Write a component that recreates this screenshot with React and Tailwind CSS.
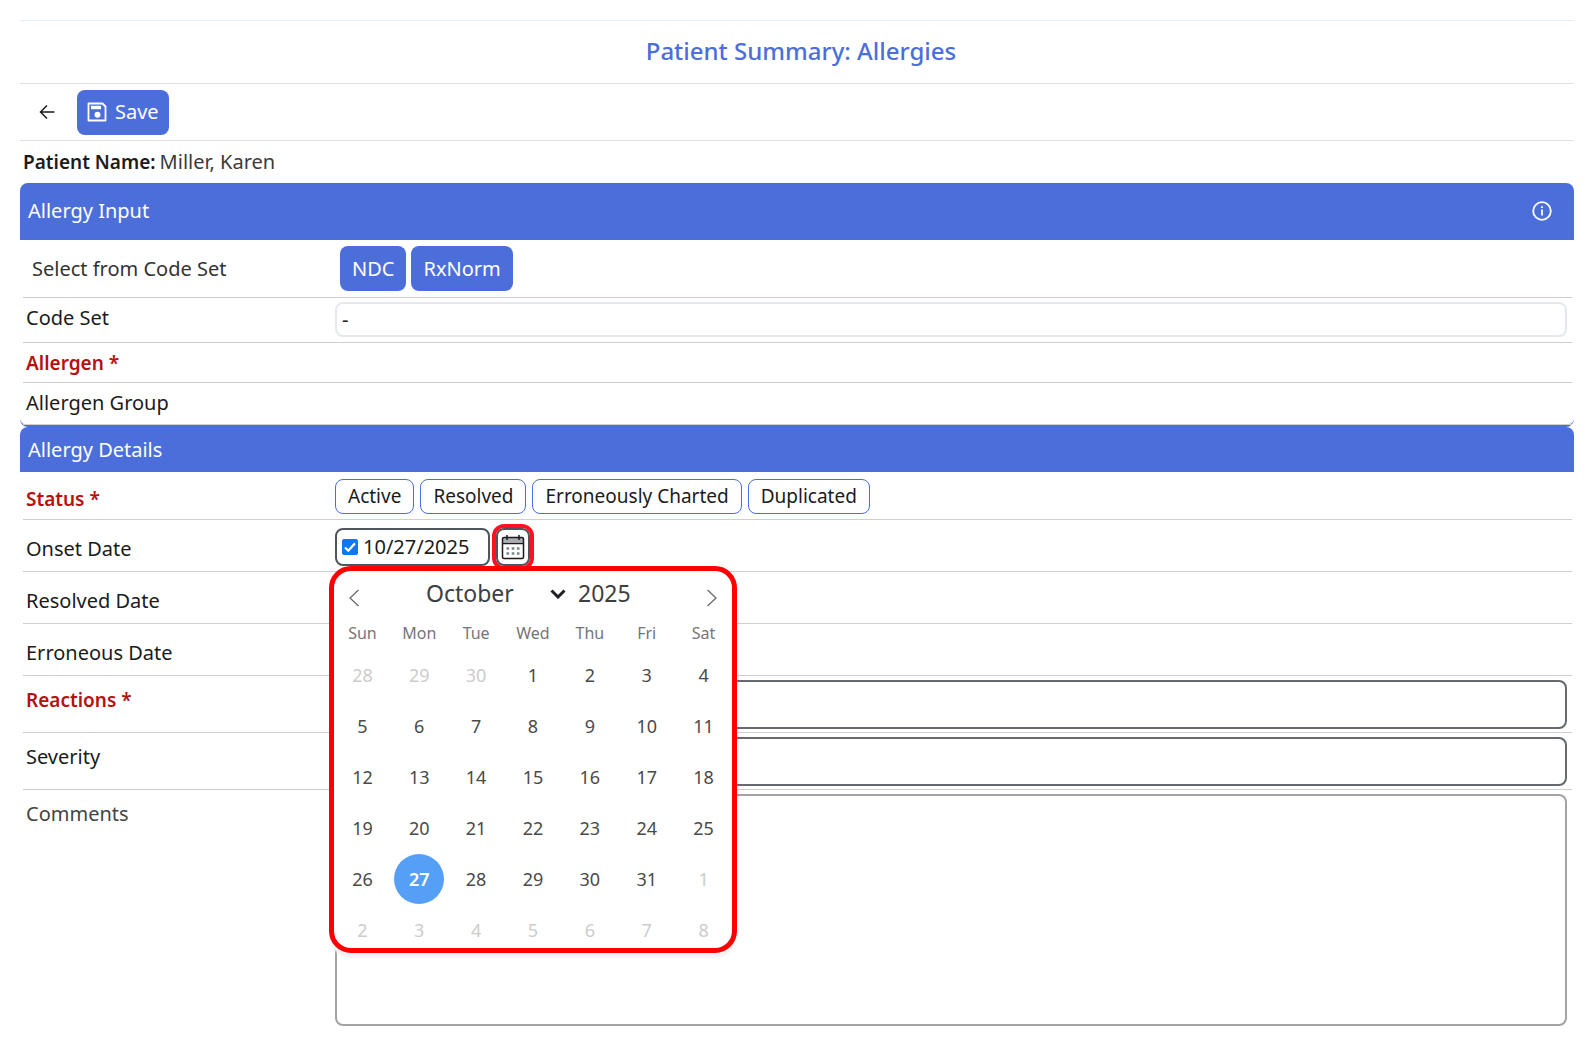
import React, { useState } from 'react';

const WEEKDAYS = ['Sun', 'Mon', 'Tue', 'Wed', 'Thu', 'Fri', 'Sat'];
const MONTHS = [
  'January', 'February', 'March', 'April', 'May', 'June',
  'July', 'August', 'September', 'October', 'November', 'December',
];
const STATUSES = ['Active', 'Resolved', 'Erroneously Charted', 'Duplicated'];

const getDays = (year, month) => {
  const offset = new Date(year, month, 1).getDay();
  return Array.from({ length: 42 }, (_, i) => {
    const date = new Date(year, month, i - offset + 1);
    return { day: date.getDate(), inMonth: date.getMonth() === month, key: i };
  });
};

const SaveIcon = () => (
  <svg viewBox="0 0 20 20" className="h-5 w-5" fill="none" stroke="currentColor" strokeWidth="1.8" aria-hidden="true">
    <path d="M1.5 1.5H15.5L18.5 4.5V18.5H1.5Z" strokeLinejoin="round" />
    <path d="M4 5.5H14" strokeWidth="3.4" />
    <circle cx="10.5" cy="12.8" r="3" fill="currentColor" stroke="none" />
  </svg>
);

const BackIcon = () => (
  <svg viewBox="0 0 16 16" className="h-4 w-4" fill="none" stroke="currentColor" strokeWidth="1.5" aria-hidden="true">
    <path d="M15.5 8H1.5M8 1.5L1.5 8L8 14.5" />
  </svg>
);

const InfoIcon = () => (
  <svg viewBox="0 0 20 20" className="h-5 w-5" fill="none" stroke="currentColor" strokeWidth="1.8" aria-hidden="true">
    <circle cx="10" cy="10" r="8.8" />
    <path d="M10 8.5V14.5M10 5.3V7" />
  </svg>
);

const CalendarIcon = () => (
  <svg viewBox="0 0 24 26" className="h-[26px] w-6 shrink-0" fill="none" stroke="currentColor" strokeWidth="1.5" aria-hidden="true">
    <path d="M2 4H22V8.5H2Z" fill="#a9adb3" stroke="none" />
    <rect x="1.5" y="3.5" width="21" height="21" rx="1.5" />
    <path d="M1.5 9.5H22.5M6 1V6M18 1V6" />
    <path d="M5.5 14.5H18.5M5.5 19.5H18.5" stroke="#7b8390" strokeWidth="2.6" strokeDasharray="2.6 2.6" />
  </svg>
);

const CheckIcon = () => (
  <svg viewBox="0 0 16 16" className="pointer-events-none absolute inset-0 h-4 w-4" fill="none" stroke="white" strokeWidth="2.2" aria-hidden="true">
    <path d="M3 8.5L6.3 11.7L13 4.3" />
  </svg>
);

const Row = ({ label, htmlFor, required, className = '', labelClass = '', children }) => (
  <div className={`ml-[3px] mr-0.5 flex border-b border-[#cfcfcf] ${className}`}>
    <div className={`w-[312px] shrink-0 pl-[3px] ${labelClass}`}>
      <label htmlFor={htmlFor} className={required ? 'text-[19px] font-semibold text-[#b80f0f]' : ''}>
        {label}{required && ' *'}
      </label>
    </div>
    <div className="flex grow pr-[5px]">{children}</div>
  </div>
);

const DatePicker = () => {
  const [month, setMonth] = useState(9);
  const [year, setYear] = useState(2025);
  const [selected, setSelected] = useState(27);

  return (
    <div className="absolute top-[38px] -left-1.5 z-10 w-[408px] rounded-[22px] border-5 border-[#ff0000] bg-white shadow-[0_6px_2px_-1px_#f1f2f3]">
      <div className="flex h-[46px] items-center justify-between px-3.5 text-[#3c4043]">
        <button type="button" aria-label="Previous month" className="pt-2" onClick={() => setMonth((month + 11) % 12)}>
          <svg viewBox="0 0 12 18" className="h-[18px] w-3" fill="none" stroke="#6b6b6b" strokeWidth="1.3">
            <path d="M10.5 1L2 9L10.5 17" />
          </svg>
        </button>
        <div className="flex items-center text-[23px]">
          <select
            aria-label="Month"
            value={month}
            onChange={(e) => setMonth(Number(e.target.value))}
            className="w-[124px] appearance-none bg-transparent"
          >
            {MONTHS.map((name, i) => (
              <option key={name} value={i}>{name}</option>
            ))}
          </select>
          <svg viewBox="0 0 16 10" className="h-2.5 w-4" fill="none" stroke="#202124" strokeWidth="3">
            <path d="M1.5 1.5L8 8L14.5 1.5" />
          </svg>
          <input
            type="text"
            aria-label="Year"
            value={year}
            onChange={(e) => setYear(Number(e.target.value) || 0)}
            className="ml-3 w-[62px]"
          />
        </div>
        <button type="button" aria-label="Next month" className="pt-2" onClick={() => setMonth((month + 1) % 12)}>
          <svg viewBox="0 0 12 18" className="h-[18px] w-3" fill="none" stroke="#6b6b6b" strokeWidth="1.3">
            <path d="M1.5 1L10 9L1.5 17" />
          </svg>
        </button>
      </div>
      <div className="grid h-[33px] grid-cols-7 items-center text-center text-base text-[#757575]">
        {WEEKDAYS.map((day) => (
          <span key={day}>{day}</span>
        ))}
      </div>
      <div className="-mb-[7px] grid grid-cols-7 gap-y-px text-lg">
        {getDays(year, month).map(({ day, inMonth, key }) => {
          const active = inMonth && day === selected;
          return (
            <button
              key={key}
              type="button"
              onClick={() => inMonth && setSelected(day)}
              className={`mx-auto h-[50px] w-[50px] rounded-full ${
                active ? 'bg-[#569ff7] font-semibold text-white' : inMonth ? 'text-[#4a4a4a]' : 'text-[#cccccc]'
              }`}
            >
              {day}
            </button>
          );
        })}
      </div>
    </div>
  );
};

const App = () => {
  const [status, setStatus] = useState('');
  const [onsetDate, setOnsetDate] = useState('10/27/2025');
  const [hasOnset, setHasOnset] = useState(true);

  return (
    <main className="min-h-screen bg-white pt-5 pr-[19px] pl-5 font-['Noto_Sans','Open_Sans',sans-serif] text-xl text-[#1b1b1b]">
      <h1 className="flex h-16 items-center justify-center border-y border-t-[#e6edfb] border-b-[#dee2e6] pb-0.5 pl-2 text-2xl font-medium text-[#4c6edb]">
        Patient Summary: Allergies
      </h1>

      <div className="flex h-[57px] items-center border-b border-[#dee2e6] pl-[19px]">
        <button type="button" aria-label="Back" className="mr-[22px]">
          <BackIcon />
        </button>
        <button type="button" className="flex h-[45px] items-center gap-2 rounded-lg bg-[#4c6edb] px-2.5 text-white">
          <SaveIcon />
          Save
        </button>
      </div>

      <p className="flex h-[42px] items-center pl-[3px]">
        <span className="mr-1 text-[19px] font-semibold">Patient Name:</span>
        <span className="text-[#3a3a3a]">Miller, Karen</span>
      </p>

      <form onSubmit={(e) => e.preventDefault()}>
        <section className="rounded-b-lg border-b-2 border-[#4c6edb]">
          <header className="flex h-[57px] items-center justify-between rounded-t-lg bg-[#4c6edb] pr-[22px] pb-0.5 pl-2 text-white">
            <h2>Allergy Input</h2>
            <button type="button" aria-label="About allergy input">
              <InfoIcon />
            </button>
          </header>

          <Row label="Select from Code Set" className="h-[58px] items-center" labelClass="pl-[9px] text-[#333]">
            <div className="flex gap-[5px] pl-[5px]">
              <button type="button" className="h-[45px] rounded-lg bg-[#4c6edb] px-3 text-white">NDC</button>
              <button type="button" className="h-[45px] rounded-lg bg-[#4c6edb] px-3 text-white">RxNorm</button>
            </div>
          </Row>
          <Row label="Code Set" htmlFor="codeSet" className="h-[45px] items-center pb-0.5" labelClass="pb-0.5">
            <input
              id="codeSet"
              type="text"
              defaultValue="-"
              className="h-[35px] w-full rounded-lg border-2 border-[#e5e8ec] px-[5px]"
            />
          </Row>
          <Row label="Allergen" required className="h-10 items-center" />
          <Row label="Allergen Group" className="h-[42px] items-center" labelClass="pb-0.5" />
        </section>

        <section>
          <header className="flex h-[45px] items-center rounded-t-lg bg-[#4c6edb] pl-2 text-white">
            <h2>Allergy Details</h2>
          </header>

          <Row label="Status" required className="h-12 items-center pt-0.5" labelClass="pt-1">
            <div className="flex gap-1.5">
              {STATUSES.map((name) => (
                <button
                  key={name}
                  type="button"
                  onClick={() => setStatus(name)}
                  className={`h-[35px] rounded-lg border border-[#4c6edb] px-3 text-[19px] leading-none ${status === name ? 'bg-[#e6edfb]' : ''}`}
                >
                  {name}
                </button>
              ))}
            </div>
          </Row>
          <Row label="Onset Date" htmlFor="onsetDate" className="h-[52px] items-center pt-0.5" labelClass="pt-1">
            <div className="relative flex">
              <div className="flex h-[38px] w-[155px] items-center rounded-lg border-2 border-[#50555c] pl-[5px]">
                <span className="relative h-4 w-4">
                  <input
                    type="checkbox"
                    aria-label="Use onset date"
                    checked={hasOnset}
                    onChange={(e) => setHasOnset(e.target.checked)}
                    className="block h-4 w-4 appearance-none rounded-xs border border-[#767676] checked:border-[#0d78f2] checked:bg-[#0d78f2]"
                  />
                  {hasOnset && <CheckIcon />}
                </span>
                <input
                  id="onsetDate"
                  type="text"
                  value={onsetDate}
                  onChange={(e) => setOnsetDate(e.target.value)}
                  className="ml-[5px] w-[120px]"
                />
              </div>
              <button
                type="button"
                aria-label="Open calendar"
                className="ml-1.5 flex h-[38px] w-[34px] items-center justify-center rounded-lg border-2 border-[#50555c] outline-4 outline-[#fb1420]"
              >
                <CalendarIcon />
              </button>
              <DatePicker />
            </div>
          </Row>
          <Row label="Resolved Date" className="h-[52px] items-center" labelClass="pt-1.5" />
          <Row label="Erroneous Date" className="h-[52px] items-center" labelClass="pt-1.5" />
          <Row label="Reactions" htmlFor="reactions" required className="h-[57px] items-center" labelClass="pb-2">
            <input id="reactions" type="text" className="h-[49px] w-full rounded-lg border-2 border-[#666a70] px-2" />
          </Row>
          <Row label="Severity" htmlFor="severity" className="h-[57px] items-center" labelClass="pb-2">
            <input id="severity" type="text" className="h-[49px] w-full rounded-lg border-2 border-[#666a70] px-2" />
          </Row>
          <Row label="Comments" htmlFor="comments" className="border-b-0 pt-1" labelClass="pt-1.5 text-[#444]">
            <textarea id="comments" className="h-[232px] w-full resize-none rounded-lg border-2 border-[#a3a3a3] p-2" />
          </Row>
        </section>
      </form>
    </main>
  );
};

export default App;
